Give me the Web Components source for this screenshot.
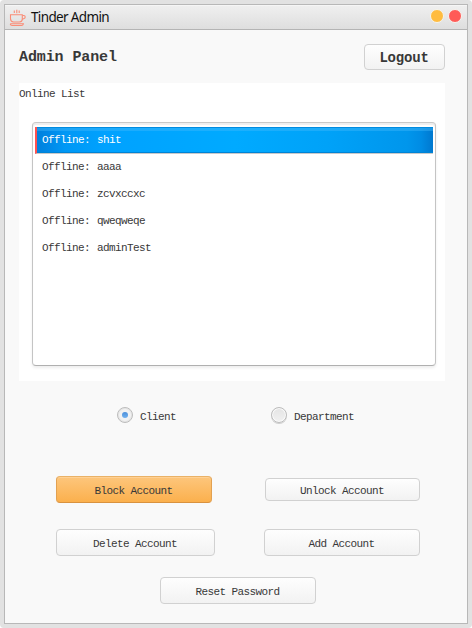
<!DOCTYPE html>
<html lang="en">
<head>
<meta charset="utf-8">
<title>Tinder Admin</title>
<style>
html,body{margin:0;width:472px;height:628px;overflow:hidden;background:#fff}
</style>
</head>
<body>
<admin-window></admin-window>
<script>
const define = (name, html) => customElements.define(name, class extends HTMLElement {
  constructor() {
    super();
    const template = document.createElement('template');
    template.innerHTML = html;
    this.attachShadow({mode: 'open'}).append(template.content.cloneNode(true));
  }
});

define('cup-icon', `<style>:host{display:block;width:18px;height:18px}svg{display:block}</style>
<svg width="18" height="18" viewBox="0 0 18 18" fill="none" stroke="#fa8c76" stroke-width="1.1">
<path d="M1.5 5.8h11.8v4.2q0 3-3 3H4.6q-3-.2-3.1-3.2z"/>
<path d="M13.5 6.5h1.2q1.5 0 1.5 1.5t-1.6 1.8l-1.4.5M1.2 14.8h13.2q-.4 1.7-1.9 1.7H3.1q-1.5 0-1.9-1.7"/>
<path d="M5.3 1.5v2.5M7.8 .7v3.6M10.2 1.5v2.5"/></svg>`);

define('title-bar', `<style>
:host{display:flex;align-items:center;box-sizing:border-box;height:25px;padding:0 5px 0 4px;background:linear-gradient(#f0f0f0,#dedede);border-bottom:1px solid #b4b4b4;box-shadow:inset 0 1px #f6f6f6;font:13.5px/24px "Noto Sans",sans-serif;color:#111}
cup-icon{margin-top:1px}
span{margin-left:4px;flex:1;letter-spacing:-.65px;white-space:nowrap}
i{width:12px;height:12px;border-radius:50%;background:#ffbc40;border:1px solid #f5f5f0;margin:0 0 3px 4px}
i.close{background:#ff5b57}
</style><cup-icon></cup-icon><span><slot></slot></span><i></i><i class="close"></i>`);

define('push-button', `<style>
:host{display:flex;box-sizing:border-box;height:27px;align-items:center;justify-content:center;border:1px solid #d1d1d1;border-radius:4px;background:linear-gradient(#fefefe,#f2f2f2);white-space:nowrap}
:host([primary]){border-color:#eab267 #e2a151 #d9923f;background:linear-gradient(#fdc67c,#fbb04d);box-shadow:inset 0 1px #ffd194}
span{padding:2px 1px 0 0}
</style><span><slot></slot></span>`);

define('radio-choice', `<style>
:host{display:flex;align-items:flex-start;gap:7px}
i{box-sizing:border-box;width:16px;height:16px;border-radius:50%;border:1px solid #bcbcbc;background:linear-gradient(#e4e4e4,#f1f1f1);box-shadow:inset 0 0 0 1px #fafafa,0 1px #cfcfcf;display:grid;place-items:center}
:host([checked]) i{background:#f2f2f2;box-shadow:inset 0 0 0 1px #e5e5e5}
:host([checked]) i::after{content:"";width:6px;height:6px;border-radius:50%;background:linear-gradient(#4c8fda,#72b1ef)}
span{padding-top:3px}
</style><i></i><span><slot></slot></span>`);

define('list-row', `<style>
:host{display:flex;box-sizing:border-box;height:27px;padding-left:7px;line-height:27px;white-space:pre}
:host([selected]){color:#fff;border-left:2px solid #ff5150;padding-left:5px;border-bottom:1px solid #c9c9c9;background:linear-gradient(90deg,#0081dc 0,#0089e8 12px,#0098f5 28px,#00a2ff 70px,#00aaff 50%,#00a2f8 290px,#0096ec 370px,#008ce4 384px,#0078cf 100%);box-shadow:inset 0 1px #008bdf,inset 0 4px rgba(70,185,250,.4),inset 0 -1px #0083d5}
span{width:55px}
</style><span>Offline:</span><slot></slot>`);

define('online-list', `<style>
:host{display:block;box-sizing:border-box;height:298px;background:#fff;padding:5px 9px 0 13px}
h2{margin:0 0 21px -13px;font:inherit;line-height:13px}
div{box-sizing:border-box;height:244px;border:1px solid #c4c4c4;border-top-color:#c8c8c8;border-bottom-color:#b0b0b0;border-radius:4px;padding:4px 2px 0;box-shadow:inset 0 2px 1px #eee,0 2px 3px #eee}
</style><h2>Online List</h2><div><slot></slot></div>`);

define('admin-window', `<style>
:host{display:block;box-sizing:border-box;width:472px;height:628px;padding:4px;background:#e2e2e2;border-radius:4px;font:11px/14px "Liberation Mono",monospace;letter-spacing:-.6px;color:#383838}
.window{box-sizing:border-box;width:464px;height:620px;border:1px solid #b8b8b8;background:#f9f9f9}
main{padding:14px 22px 0 14px}
header{display:flex;justify-content:space-between;height:39px}
h1{margin:5px 0 0;font:bold 15px/18px "Liberation Mono",monospace;letter-spacing:-.1px}
.logout{width:81px;height:26px;font-weight:bold;font-size:14px;letter-spacing:-.2px}
online-list{padding-right:9px}
.choices{display:grid;grid-template-columns:154px auto;padding:26px 0 0 98px;height:42px;align-items:start}
.actions{display:grid;grid-template-columns:159px 156px;column-gap:49px;grid-template-rows:27px 27px;row-gap:26px;padding:27px 0 0 37px;align-items:center}
.reset{width:156px;margin:21px 0 0 141px}
</style>
<div class="window"><title-bar>Tinder Admin</title-bar><main>
<header><h1>Admin Panel</h1><push-button class="logout">Logout</push-button></header>
<online-list><list-row selected>shit</list-row><list-row>aaaa</list-row><list-row>zcvxccxc</list-row><list-row>qweqweqe</list-row><list-row>adminTest</list-row></online-list>
<div class="choices"><radio-choice checked>Client</radio-choice><radio-choice>Department</radio-choice></div>
<div class="actions"><push-button primary style="width:156px">Block Account</push-button><push-button style="width:155px;height:23px;margin-left:1px">Unlock Account</push-button><push-button>Delete Account</push-button><push-button>Add Account</push-button></div>
<push-button class="reset">Reset Password</push-button>
</main></div>`);
</script>
</body>
</html>
